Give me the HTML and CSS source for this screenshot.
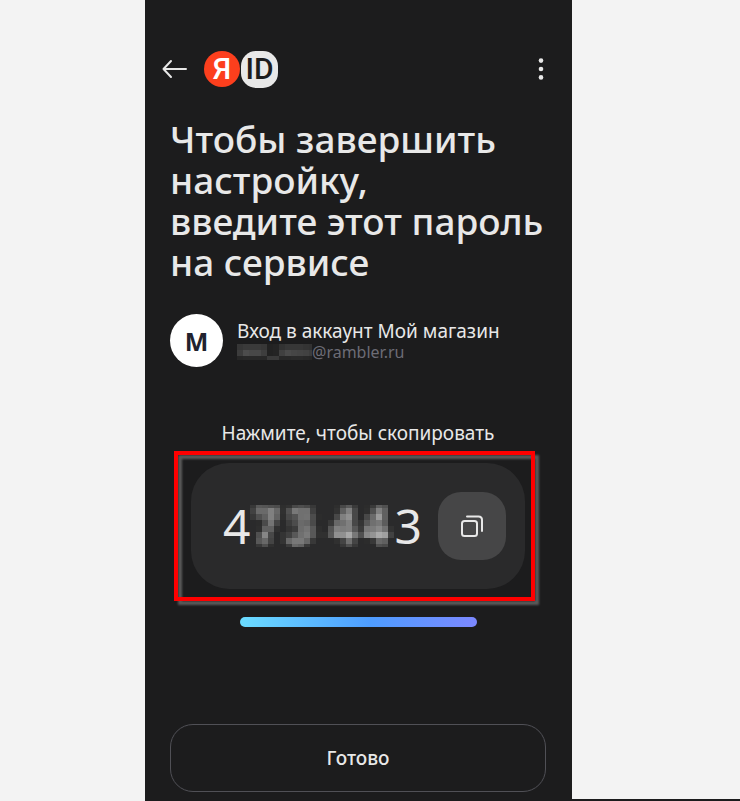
FILE: index.html
```html
<!DOCTYPE html>
<html lang="ru">
<head>
<meta charset="utf-8">
<meta name="viewport" content="width=device-width, initial-scale=1">
<title>Яндекс ID</title>
<link rel="stylesheet" href="styles.css">
</head>
<body>
<main class="phone">
  <header class="topbar">
    <button class="icon-button" type="button" aria-label="Назад">
      <svg width="26" height="20" viewBox="0 0 26 20" fill="none" stroke="currentColor" stroke-width="2" stroke-linecap="round" stroke-linejoin="round"><path d="M24 10H1.500M9 2 1.500 10 9 18"/></svg>
    </button>
    <div class="logo">
      <span class="logo-ya">Я</span>
      <span class="logo-id">ID</span>
    </div>
    <button class="icon-button menu" type="button" aria-label="Меню">
      <svg width="6" height="22" viewBox="0 0 6 22" fill="currentColor"><circle cx="3" cy="2.600" r="2.300"/><circle cx="3" cy="11" r="2.300"/><circle cx="3" cy="19.400" r="2.300"/></svg>
    </button>
  </header>

  <h1 class="title">Чтобы завершить<br>настройку,<br>введите этот пароль<br>на сервисе</h1>

  <section class="account">
    <span class="avatar">М</span>
    <div class="account-text">
      <p class="account-name">Вход в аккаунт Мой магазин</p>
      <p class="account-mail"><svg class="mask-mail" width="75" height="16" viewBox="0 0 75 16"></svg>@rambler.ru</p>
    </div>
  </section>

  <p class="hint">Нажмите, чтобы скопировать</p>
  <div class="highlight">
    <div class="code-card">
      <div class="code">
        <span>4</span>
        <svg class="mask-code" width="144" height="48" viewBox="0 0 144 48"></svg>
        <span>3</span>
      </div>
      <button class="copy" type="button" aria-label="Скопировать">
        <svg width="24" height="24" viewBox="0 0 24 24" fill="none" stroke="currentColor" stroke-width="2" stroke-linecap="round"><rect x="2" y="7" width="15" height="15" rx="2.500"/><path d="M7 2.500H18.500Q22 2.500 22 6V17"/></svg>
      </button>
    </div>
  </div>
  <div class="timer"></div>
  <button class="done" type="button">Готово</button>
</main>
<script src="mask.js"></script>
</body>
</html>
```
FILE: styles.css
```css
* { box-sizing: border-box; }

body {
  margin: 0;
  min-height: 100vh;
  display: grid;
  grid-template-columns: 145fr 427fr 168fr;
  background: linear-gradient(#1c1c1d, #1c1c1d) right bottom / 50% 2px no-repeat #f3f3f3;
  color: #e8e8e8;
  font-family: "Noto Sans", "Open Sans", sans-serif;
}

h1, p { margin: 0; }

button {
  font: inherit;
  color: inherit;
  border: 0;
  padding: 0;
  background: none;
  cursor: pointer;
}

svg { display: block; }

.phone {
  grid-column: 2;
  display: flex;
  flex-direction: column;
  padding: 50px 26px 9px 25px;
  background: #1c1c1d;
}

.topbar {
  display: flex;
  align-items: center;
  gap: 16px;
  margin-left: -8px;
}

.icon-button { flex: none; }

.menu { margin-left: auto; padding: 8px 2px; }

.logo { display: flex; align-items: center; gap: 1px; }

.logo span {
  display: flex;
  align-items: center;
  justify-content: center;
  font-family: "Roboto", sans-serif;
  font-size: 30px;
  font-weight: 500;
  line-height: 36px;
}

.logo-ya {
  width: 36px;
  height: 36px;
  border-radius: 50%;
  background: #fc3f1d;
  color: #fff;
}

.logo-id {
  width: 37px;
  height: 37px;
  border-radius: 15px;
  background: #e8e8e8;
  color: #1c1c1d;
}

.title {
  margin-top: 30px;
  font-size: 37px;
  font-weight: 500;
  line-height: 41px;
}

.account {
  display: flex;
  align-items: center;
  gap: 14px;
  margin-top: 32px;
}

.avatar {
  display: flex;
  align-items: center;
  justify-content: center;
  width: 53px;
  height: 53px;
  border-radius: 50%;
  background: #fff;
  color: #22222e;
  font-size: 25px;
  font-weight: 700;
}

.account-name { font-size: 19px; line-height: 22px; }

.account-mail {
  display: flex;
  align-items: center;
  color: #6c6c76;
  font-size: 16px;
  line-height: 20px;
}

.hint {
  margin-top: 54px;
  text-align: center;
  font-size: 19px;
  line-height: 24px;
}

.highlight {
  position: relative;
  margin: 6px 11px 0 4px;
  padding: 12px 10px 12px 17px;
}

.highlight::before {
  content: "";
  position: absolute;
  inset: 0;
  border: 4px solid #f00;
  filter: drop-shadow(4px 4px 1px #5a5a5a);
}

.code-card {
  position: relative;
  display: flex;
  align-items: center;
  justify-content: space-between;
  height: 126px;
  padding: 0 19px 0 32px;
  border-radius: 38px;
  background: #2a2a2b;
}

.code {
  display: flex;
  align-items: center;
  font-size: 48px;
  line-height: 60px;
}

.copy {
  display: flex;
  align-items: center;
  justify-content: center;
  width: 68px;
  height: 68px;
  border-radius: 23px;
  background: #464647;
}

.timer {
  height: 10px;
  margin: 16px 69px 0 70px;
  border-radius: 5px;
  background: linear-gradient(90deg, #6bdcff, #4e9dff 55%, #7c88ff);
}

.done {
  height: 68px;
  margin-top: auto;
  border: 1px solid #505056;
  border-radius: 23px;
  font-size: 19px;
  font-weight: 500;
}
```
FILE: mask.js
```js
// Draws masked text as a mosaic of 6px grey cells. "--" leaves a cell empty.
function drawMask(selector, cell, rows) {
  const svg = document.querySelector(selector);
  rows.forEach((row, y) => {
    row.split(" ").forEach((level, x) => {
      if (level === "--") return;
      const rect = document.createElementNS("http://www.w3.org/2000/svg", "rect");
      const top = y === 0 && cell.cropTop ? cell.size / 2 : 0;
      const bottom = y === rows.length - 1 && cell.cropBottom ? 3 : 0;
      rect.setAttribute("x", x * cell.size);
      rect.setAttribute("y", y * cell.size + top);
      rect.setAttribute("width", cell.size);
      rect.setAttribute("height", cell.size - top - bottom);
      rect.setAttribute("fill", "#" + level.repeat(3));
      svg.append(rect);
    });
  });
}

drawMask(".mask-code", { size: 6, cropTop: true, cropBottom: true }, [
  "38 58 55 50 4c 2e 32 48 4e 48 38 -- -- -- 2e 48 58 3a -- 2c 3a 5c 50 --",
  "42 6a 6a 80 68 30 50 78 70 70 40 -- -- -- 32 60 80 48 -- 2e 50 80 60 --",
  "38 50 60 80 62 2e 48 54 70 72 4c 2c -- -- 48 80 90 48 -- 48 6a 9a 60 --",
  "-- 2c 4a 74 44 -- 3c 4c 6a 66 4a -- -- 38 68 70 80 48 34 58 70 78 5c --",
  "-- 2e 60 60 30 -- 34 3c 6c 74 58 2e -- 54 80 7c 80 58 3a 78 7c 88 72 32",
  "-- 50 86 48 -- 34 40 58 70 7a 58 30 30 58 90 90 a8 78 50 88 94 aa a0 42",
  "-- 58 68 44 -- 34 68 78 78 66 38 -- -- -- 30 44 70 44 -- 2c 38 68 60 --",
  "-- 38 4e 30 -- -- 3c 68 60 38 -- -- -- -- -- 38 50 38 -- -- -- 50 4a --"
]);

drawMask(".mask-mail", { size: 6 }, [
  "36 3a 3a 3a 37 22 24 32 37 37 37 34 32",
  "3c 4c 48 48 3e 22 24 40 4a 46 44 42 3c",
  "26 28 28 28 28 3a 3a 28 28 2a 2a 28 26"
]);
```
